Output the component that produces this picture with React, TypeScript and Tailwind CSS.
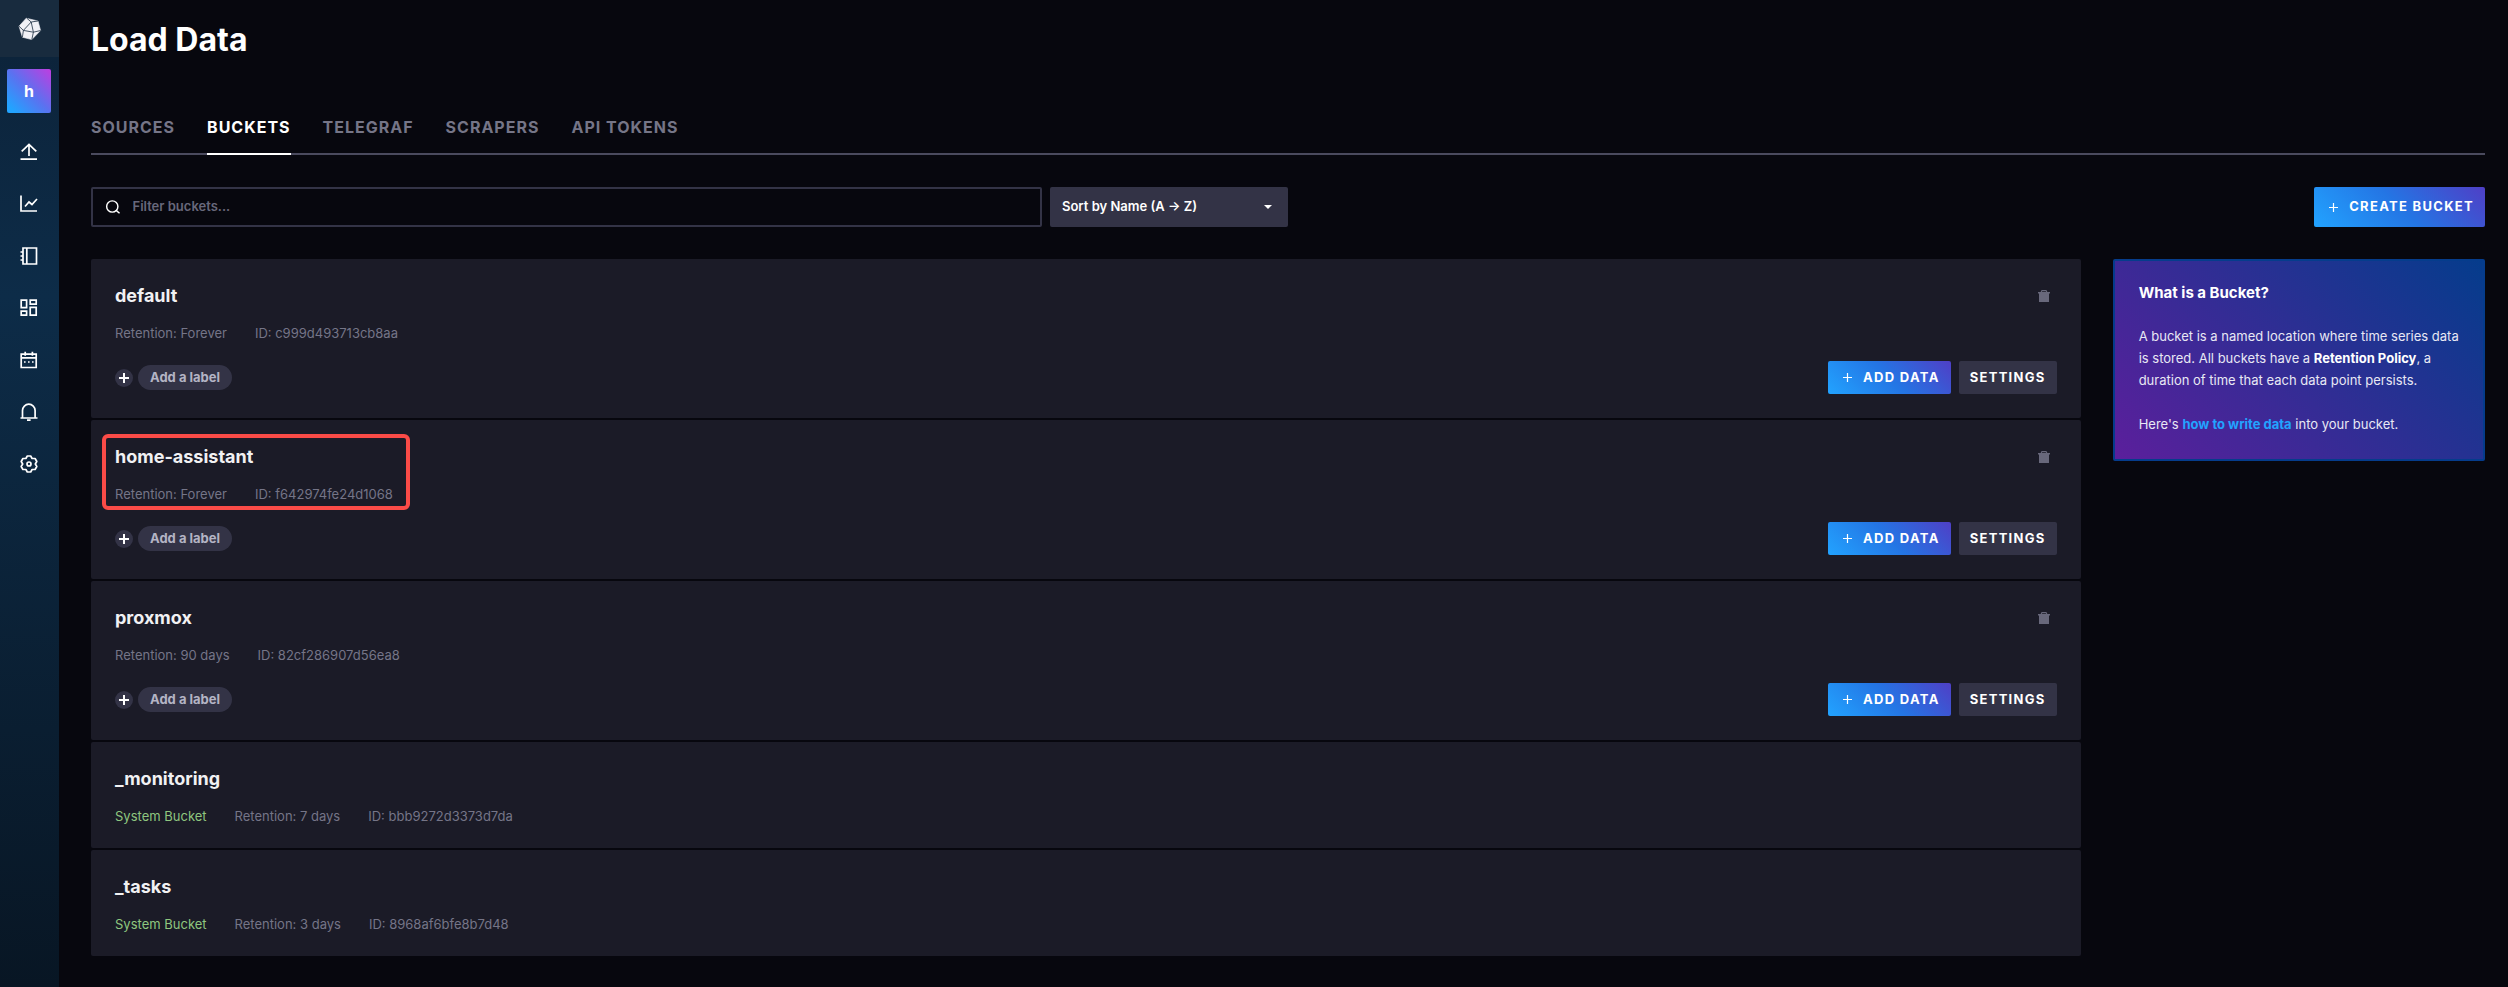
import React, { useState } from 'react';

type Bucket = {
  name: string;
  id: string;
  retention: string;
  system?: boolean;
  highlighted?: boolean;
};

const buckets: Bucket[] = [
  { name: 'default', id: 'c999d493713cb8aa', retention: 'Forever' },
  { name: 'home-assistant', id: 'f642974fe24d1068', retention: 'Forever', highlighted: true },
  { name: 'proxmox', id: '82cf286907d56ea8', retention: '90 days' },
  { name: '_monitoring', id: 'bbb9272d3373d7da', retention: '7 days', system: true },
  { name: '_tasks', id: '8968af6bfe8b7d48', retention: '3 days', system: true }
];

const tabs = ['Sources', 'Buckets', 'Telegraf', 'Scrapers', 'API Tokens'];

const navItems = [
  { name: 'Load Data', icon: <path d="M0.5 16.2H17M9 13V1.5M1.7 8.4L9 1.4l7.3 7" /> },
  { name: 'Data Explorer', icon: <path d="M1 0.5V16h16M5 11.5l4-4.5 3 2.5 5-5.5" /> },
  {
    name: 'Notebooks',
    icon: <path d="M3 1h13.5v16H3zM6.8 1v16M0.5 5H3M0.5 9H3M0.5 13H3" />
  },
  {
    name: 'Dashboards',
    icon: <path d="M1.2 1.2h5.4v7.4H1.2zM1.2 12.2h5.4v4H1.2zM10.2 1.2h6v4h-6zM10.2 8.4h6v7.8h-6z" />
  },
  {
    name: 'Tasks',
    icon: (
      <path d="M1.2 3.2h15v13.3h-15zM1.2 6.8h15M5.2 0.8v4M12.4 0.8v4M4 11h1.6M8 11h1.6M12 11h1.6" />
    )
  },
  {
    name: 'Alerts',
    icon: <path d="M0.5 15H17.5M2.5 15V7.5a6.3 6.3 0 0 1 12.6 0V15M7 17.2h3.6" />
  },
  {
    name: 'Settings',
    icon: (
      <>
        <path
          strokeLinejoin="round"
          d="M7.3 1h3.4l1.4 2.5h3l1.7 3L15.3 9l1.5 2.5-1.7 3h-3L10.7 17H7.3l-1.4-2.5h-3l-1.7-3L2.7 9 1.2 6.5l1.7-3h3z"
        />
        <circle cx="9" cy="9" r="2" />
      </>
    )
  }
];

const Logo: React.FC = () => (
  <svg width="24" height="24" viewBox="0 0 24 24" aria-hidden="true">
    <path
      d="M8.2 1.2L20 4L22.6 13.5L13.8 22.6L4.4 20.2L1 9.2Z"
      fill="#f1f1f6"
      stroke="#f1f1f6"
      strokeWidth="0.6"
      strokeLinejoin="round"
    />
    <path
      d="M1 9.2L5.4 13.4L13.2 5L8.8 1.2M13.2 5L20 4M13.2 5L15.4 15.2L22.6 13.5M15.4 15.2L5.4 13.4L4.4 20.2M15.4 15.2L13.8 22.6"
      fill="none"
      stroke="#1b2d40"
      strokeWidth="0.8"
    />
  </svg>
);

const PlusIcon: React.FC = () => (
  <svg width="9" height="9" viewBox="0 0 9 9" stroke="currentColor" strokeWidth="1.2" aria-hidden="true">
    <path d="M4.5 0v9M0 4.5h9" />
  </svg>
);

const Sidebar: React.FC = () => (
  <nav className="w-[59px] shrink-0 bg-linear-to-b from-[#0c2238] via-[#0d2c48] via-30% to-[#081624]">
    <a href="#home" aria-label="Home" className="flex h-[57px] items-center justify-center bg-[#182b3e]">
      <Logo />
    </a>
    <div className="flex w-[58px] flex-col items-center pt-3">
      <button className="h-11 w-11 rounded-xs bg-linear-45/srgb from-[#22a3ff] from-10% via-[#5a72f0] to-[#bf3de0] text-base font-bold text-white">
        h
      </button>
      <div className="mt-[13px] flex flex-col">
        {navItems.map(item => (
          <a
            key={item.name}
            href="#nav"
            aria-label={item.name}
            className="flex h-[52px] w-[58px] items-center justify-center text-white"
          >
            <svg width="18" height="18" viewBox="0 0 18 18" fill="none" stroke="currentColor" strokeWidth="1.7">
              {item.icon}
            </svg>
          </a>
        ))}
      </div>
    </div>
  </nav>
);

const BucketCard: React.FC<{ bucket: Bucket }> = ({ bucket }) => (
  <article className="relative rounded-xs bg-[#1b1b27] p-6">
    <div className="flex items-center justify-between">
      <h2 className="text-lg leading-[26px] font-bold text-[#f1f1f3]">{bucket.name}</h2>
      {!bucket.system && (
        <button aria-label={`Delete ${bucket.name}`} className="mr-[3px] p-1 text-[#68687b]">
          <svg width="12" height="12" viewBox="0 0 12 12" fill="currentColor" aria-hidden="true">
            <path d="M0 2h2.6L3.6 0h4.8l1 2H12v1.4h-1V12H1V3.4H0zM4.2 1.3L3.9 2h4.2l-0.3-0.7z" />
          </svg>
        </button>
      )}
    </div>
    <div className="mt-4 flex gap-7 text-[13px] leading-4 text-[#757587]">
      {bucket.system && <span className="text-[#8fc77f]">System Bucket</span>}
      <span>Retention: {bucket.retention}</span>
      <span>ID: {bucket.id}</span>
    </div>
    {!bucket.system && (
      <div className="mt-5 flex items-center justify-between">
        <div className="flex items-center gap-[5px]">
          <button
            aria-label="Add label"
            className="flex h-[18px] w-[18px] items-center justify-center rounded-full bg-[#333346] text-white"
          >
            <svg width="10" height="10" viewBox="0 0 10 10" stroke="currentColor" strokeWidth="2">
              <path d="M5 0v10M0 5h10" />
            </svg>
          </button>
          <button className="h-[25px] rounded-full bg-[#333346] px-3 text-[13px] font-bold text-[#b4b4c4]">
            Add a label
          </button>
        </div>
        <div className="flex gap-2">
          <button className="flex h-[33px] items-center gap-[11px] rounded-xs bg-linear-45/srgb from-[#22a3ff] via-[#2475e4] to-[#4f3fc6] pr-[11px] pl-[15px] text-[13px] font-bold tracking-widest text-white uppercase">
            <PlusIcon />
            Add Data
          </button>
          <button className="h-[33px] rounded-xs bg-[#333346] px-[11px] text-[13px] font-bold tracking-widest text-white uppercase">
            Settings
          </button>
        </div>
      </div>
    )}
    {bucket.highlighted && (
      <div className="pointer-events-none absolute top-[14px] left-[11px] h-[76px] w-[308px] rounded-md border-4 border-[#fb4b47]" />
    )}
  </article>
);

const App: React.FC = () => {
  const [activeTab, setActiveTab] = useState('Buckets');
  const [search, setSearch] = useState('');

  const visible = buckets.filter(b => b.name.includes(search.toLowerCase()));

  return (
    <div className="flex min-h-screen bg-[#07070e] font-[Inter,sans-serif]">
      <Sidebar />
      <main className="min-w-0 flex-1 pr-[23px] pb-[30px] pl-8">
        <h1 className="pt-5 text-[32px] leading-10 font-bold text-white">Load Data</h1>

        {/* Tabs */}
        <div className="mt-[42px] flex gap-8 border-b-2 border-[#4a4a5e]">
          {tabs.map(tab => (
            <button
              key={tab}
              onClick={() => setActiveTab(tab)}
              className={`-mb-0.5 border-b-2 pt-[13px] pb-[14px] text-base leading-6 font-bold tracking-[1px] uppercase ${
                tab === activeTab ? 'border-white text-white' : 'border-transparent text-[#757587]'
              }`}
            >
              {tab}
            </button>
          ))}
        </div>

        {/* Controls */}
        <div className="mt-8 flex items-center justify-between">
          <div className="flex w-1/2 gap-2">
            <label className="flex h-10 flex-1 items-center gap-3 rounded-xs border-2 border-[#333346] px-3 text-white">
              <svg width="16" height="16" viewBox="0 0 16 16" fill="none" stroke="currentColor" strokeWidth="1.5">
                <circle cx="7.5" cy="7.5" r="5.8" />
                <path d="M11.2 11.2L15 14.5" />
              </svg>
              <input
                type="text"
                aria-label="Filter buckets"
                placeholder="Filter buckets..."
                value={search}
                onChange={e => setSearch(e.target.value)}
                className="w-full bg-transparent text-[13px] font-semibold outline-none placeholder:text-[#68687b]"
              />
            </label>
            <div className="relative w-[238px]">
              <select
                aria-label="Sort buckets"
                className="h-10 w-full appearance-none rounded-xs bg-[#333346] px-3 text-[13px] font-semibold text-white"
              >
                <option>Sort by Name (A → Z)</option>
                <option>Sort by Name (Z → A)</option>
              </select>
              <svg className="pointer-events-none absolute top-[18px] right-4" width="8" height="4" viewBox="0 0 8 4">
                <path d="M0 0h8L4 4z" fill="#fff" />
              </svg>
            </div>
          </div>
          <button className="flex h-10 items-center gap-[11px] rounded-xs bg-linear-45/srgb from-[#22a3ff] via-[#2475e4] to-[#4f3fc6] pr-[11px] pl-[15px] text-[13px] font-bold tracking-widest text-white uppercase">
            <PlusIcon />
            Create Bucket
          </button>
        </div>

        <div className="mt-8 grid grid-cols-6 items-start gap-8">
          <section className="col-span-5 flex flex-col gap-0.5">
            {visible.map(bucket => (
              <BucketCard key={bucket.id} bucket={bucket} />
            ))}
          </section>

          <aside className="rounded-xs border-2 border-[#053c8c] bg-linear-45/srgb from-[#5b1f9c] to-[#053c8c] p-6 text-[13px] leading-[22px] text-[#e8e8f4]">
            <h2 className="text-[15px] leading-4 font-bold text-white">What is a Bucket?</h2>
            <p className="mt-6">
              A bucket is a named location where time series data is stored. All buckets have a{' '}
              <b className="font-bold text-white">Retention Policy</b>, a duration of time that each data point
              persists.
            </p>
            <p className="mt-[22px]">
              Here's{' '}
              <a href="#write-data" className="font-bold text-[#22a3ff]">
                how to write data
              </a>{' '}
              into your bucket.
            </p>
          </aside>
        </div>
      </main>
    </div>
  );
};

export default App;
